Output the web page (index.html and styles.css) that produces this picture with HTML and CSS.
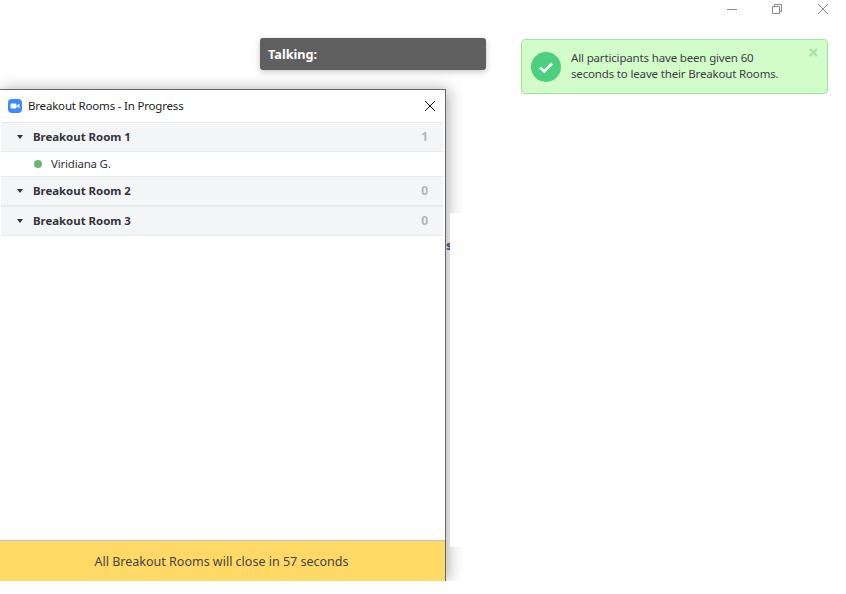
FILE: index.html
```html
<!DOCTYPE html>
<html lang="en">
<head>
<meta charset="utf-8">
<title>Breakout Rooms</title>
<link rel="stylesheet" href="styles.css">
</head>
<body>
<div class="desktop">
  <div class="win-controls">
    <svg class="ctl" width="12" height="12" viewBox="0 0 12 12"><path d="M1 6.5H11" stroke="#8a8a8a" fill="none"/></svg>
    <svg class="ctl" width="12" height="12" viewBox="0 0 12 12"><path d="M1.5 3.5H8.5V10.5H1.5ZM3.5 3.5V1.5H10.5V8.5H8.5" stroke="#8a8a8a" fill="none"/></svg>
    <svg class="ctl ctl-close" width="12" height="12" viewBox="0 0 12 12"><path d="M1 1L11 11M11 1L1 11" stroke="#8a8a8a" fill="none"/></svg>
  </div>
  <div class="talking">Talking:</div>
  <div class="toast">
    <svg class="toast-icon" width="30" height="30" viewBox="0 0 30 30"><circle cx="15" cy="15" r="15" fill="#4ccf7e"/><path d="M9 15.5L13.2 19.5L21 11.5" stroke="#fff" stroke-width="2.6" fill="none"/></svg>
    <p class="toast-text">All participants have been given 60 seconds to leave their Breakout Rooms.</p>
    <svg class="toast-close" width="9" height="9" viewBox="0 0 9 9"><path d="M1 1L8 8M8 1L1 8" stroke="#a3e3a3" stroke-width="2" fill="none"/></svg>
  </div>
  <section class="panel">
    <header class="panel-head">
      <svg width="14" height="14" viewBox="0 0 14 14"><rect width="14" height="14" rx="4" fill="#3b8cfb"/><rect x="2.5" y="4.5" width="6" height="5" rx="1.2" fill="#fff"/><path d="M9 6.5L11.5 4.8V9.2L9 7.5Z" fill="#fff"/></svg>
      <h1 class="panel-title">Breakout Rooms - In Progress</h1>
      <svg class="panel-close" width="12" height="12" viewBox="0 0 12 12"><path d="M1 1L11 11M11 1L1 11" stroke="#111" fill="none"/></svg>
    </header>
    <div class="rooms">
      <div class="room"><span class="caret"></span><span class="room-name">Breakout Room 1</span><span class="count">1</span></div>
      <div class="member"><span class="dot"></span><span class="member-name">Viridiana G.</span></div>
      <div class="room"><span class="caret"></span><span class="room-name">Breakout Room 2</span><span class="count">0</span></div>
      <div class="room"><span class="caret"></span><span class="room-name">Breakout Room 3</span><span class="count">0</span></div>
    </div>
    <footer class="panel-foot">All Breakout Rooms will close in 57 seconds</footer>
  </section>
  <div class="backdrop"><span class="cut"><span class="cut-glyph">s</span></span></div>
</div>
</body>
</html>
```
FILE: styles.css
```css
* { box-sizing: border-box; }
html, body { margin: 0; padding: 0; background: #fff; }
body { font-family: "Noto Sans", "Open Sans", sans-serif; overflow: hidden; }
.desktop { position: relative; width: 846px; height: 594px; overflow: hidden; background: #fff; }

.win-controls { position: absolute; top: 3px; left: 726px; display: flex; gap: 33px; }
.ctl { display: block; }
.ctl-close { margin-left: 1px; }

.talking {
  position: absolute; left: 260px; top: 38px; width: 226px; height: 32px;
  padding-left: 8px; line-height: 32px;
  background: #5f5f5f; border-radius: 3px; color: #fff;
  font-size: 12.7px; font-weight: 700;
  box-shadow: 0 2px 6px rgba(0,0,0,.22);
}

.toast {
  position: absolute; left: 521px; top: 39px; width: 307px; height: 55px;
  display: flex; align-items: center;
  padding-left: 9px;
  background: #d2fdc9; border: 1px solid #a3e3a3; border-radius: 4px;
}
.toast-icon { flex: none; }
.toast-text { margin: -1px 0 0 10px; width: 226px; font-size: 11.5px; letter-spacing: -.16px; line-height: 16px; color: #3c3c48; }
.toast-close { position: absolute; right: 9px; top: 8px; }

.panel {
  position: absolute; left: -1px; top: 89px; width: 447px; height: 492px;
  display: flex; flex-direction: column;
  background: #fff; border: 1px solid #666; border-bottom: 0;
  box-shadow: 3px 0 14px rgba(0,0,0,.3);
  clip-path: inset(-30px -30px 0 0);
}
.panel-head { flex: none; height: 32px; display: flex; align-items: center; padding: 0 9px 0 8px; gap: 6px; }
.panel-title { margin: -1px 0 0; flex: 1; font-size: 11.5px; letter-spacing: -.19px; font-weight: 400; color: #1a1a1a; }
.panel-close { flex: none; }

.rooms { flex: 1; padding: 0 2px 0 1px; }
.room {
  height: 30px; display: flex; align-items: center;
  background: #f4f5f7; border-top: 1px solid #e9eaec; border-bottom: 1px solid #e9eaec;
}
.caret {
  flex: none; margin-left: 16px; width: 0; height: 0;
  border-left: 3.5px solid transparent; border-right: 3.5px solid transparent; border-top: 4px solid #333;
}
.room-name { flex: 1; margin: -1px 0 0 10px; font-size: 11.4px; font-weight: 700; color: #33333d; }
.count { margin: -1px 15px 0 0; font-size: 12px; font-weight: 700; color: #b4b4b8; }
.member { height: 24px; display: flex; align-items: center; }
.dot { flex: none; margin-left: 33px; width: 8px; height: 8px; border-radius: 50%; background: #6fb574; }
.member-name { margin: -1px 0 0 9px; font-size: 11.5px; letter-spacing: -.2px; color: #33333d; }

.panel-foot {
  flex: none; height: 41px; line-height: 41px; text-align: center; padding-right: 2px;
  background: #ffd966; border-top: 1px solid #c4c4c4;
  font-size: 12.5px; color: #444;
}

.backdrop { position: absolute; left: 450px; top: 213px; width: 396px; height: 334px; background: #fff; }
.cut { position: absolute; left: -4px; top: 26px; width: 4px; height: 14px; overflow: hidden; }
.cut-glyph { display: block; font-size: 12px; line-height: 14px; font-weight: 700; color: #1a5a9a; text-shadow: 1px 0 #c8933a; }
```
